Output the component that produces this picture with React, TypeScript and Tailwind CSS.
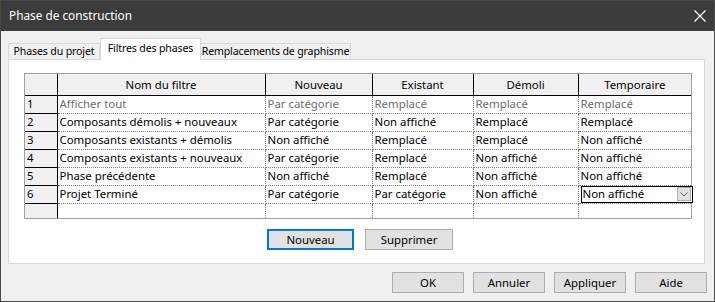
import React from "react";

const font = { fontFamily: '"Noto Sans", "Open Sans", sans-serif' };

type Row = { n: string; name: string; cells: string[]; gray?: boolean };

const rows: Row[] = [
  { n: "1", name: "Afficher tout", cells: ["Par catégorie", "Remplacé", "Remplacé", "Remplacé"], gray: true },
  { n: "2", name: "Composants démolis + nouveaux", cells: ["Par catégorie", "Non affiché", "Remplacé", "Remplacé"] },
  { n: "3", name: "Composants existants + démolis", cells: ["Non affiché", "Remplacé", "Remplacé", "Non affiché"] },
  { n: "4", name: "Composants existants + nouveaux", cells: ["Par catégorie", "Remplacé", "Non affiché", "Non affiché"] },
  { n: "5", name: "Phase précédente", cells: ["Non affiché", "Remplacé", "Non affiché", "Non affiché"] },
  { n: "6", name: "Projet Terminé", cells: ["Par catégorie", "Par catégorie", "Non affiché", ""] },
];

const widths = [33, 208, 107, 101, 105, 114];
const headers = ["", "Nom du filtre", "Nouveau", "Existant", "Démoli", "Temporaire"];

function Dropdown() {
  return (
    <div className="flex h-[17px] w-[112px] items-center border border-black bg-white">
      <span className="flex-1 pl-[1px] leading-none text-black">Non affiché</span>
      <div className="mr-[1px] flex h-[14px] w-[14px] items-center justify-center border border-[#adadad] bg-[#e1e1e1]">
        <svg width="8" height="5" viewBox="0 0 8 5">
          <path d="M0.5 0.5 L4 4 L7.5 0.5" fill="none" stroke="#606060" strokeWidth="1" />
        </svg>
      </div>
    </div>
  );
}

export default function App() {
  return (
    <div
      className="flex h-[302px] w-[715px] flex-col border border-[#4a4a4a] bg-[#f0f0f0] text-[11.4px] text-black"
      style={font}
    >
      {/* Title bar */}
      <div className="flex h-[30px] shrink-0 items-center justify-between bg-[#3c3c3c] pl-[8px] pr-[8px]">
        <span className="text-[11.8px] text-white">Phase de construction</span>
        <svg width="12" height="12" viewBox="0 0 12 12">
          <path d="M0.5 0.5 L11.5 11.5 M11.5 0.5 L0.5 11.5" stroke="#ffffff" strokeWidth="1.2" />
        </svg>
      </div>

      <div className="flex flex-1 flex-col px-[7px] pt-[7px]">
        {/* Tabs */}
        <div className="relative z-10 flex h-[21px] items-end whitespace-nowrap text-[10.6px] tracking-[-0.15px]">
          <div className="flex h-[16px] w-[92px] items-center justify-center border border-b-0 border-[#d9d9d9] bg-[#f0f0f0] leading-none">
            Phases du projet
          </div>
          <div className="-mb-[1px] flex h-[22px] w-[101px] items-center justify-center border border-b-0 border-[#d9d9d9] bg-white pb-[2px] leading-none">
            Filtres des phases
          </div>
          <div className="flex h-[16px] w-[150px] items-center justify-center border border-b-0 border-l-0 border-[#d9d9d9] bg-[#f0f0f0] leading-none">
            Remplacements de graphisme
          </div>
        </div>

        {/* Panel */}
        <div className="flex h-[205px] w-[697px] flex-col border border-[#d9d9d9] bg-white pl-[15px] pt-[13px]">
          <div className="w-[668px] border border-[#a0a0a0]">
            <table className="border-collapse" style={{ tableLayout: "fixed", width: 666 }}>
              <colgroup>
                {widths.map((w, i) => (
                  <col key={i} style={{ width: i === 0 ? w - 1 : i === 5 ? w - 1 : w }} />
                ))}
              </colgroup>
              <thead>
                <tr className="h-[21px]">
                  {headers.map((h, i) => (
                    <th
                      key={i}
                      className="border border-t-0 border-black bg-[#f0f0f0] p-0 text-center font-normal first:border-l-0 last:border-r-0"
                    >
                      {h}
                    </th>
                  ))}
                </tr>
              </thead>
              <tbody>
                {rows.map((r) => (
                  <tr key={r.n} className="h-[18px]">
                    <td className="border border-l-0 border-black bg-[#f0f0f0] p-0 pl-[2px] leading-none">{r.n}</td>
                    <td
                      className={`border border-dotted border-[#808080] border-l-black p-0 pl-[2px] leading-none whitespace-nowrap ${
                        r.gray ? "text-[#6d6d6d]" : ""
                      }`}
                    >
                      {r.name}
                    </td>
                    {r.cells.map((c, i) => (
                      <td
                        key={i}
                        className={`border border-dotted border-[#808080] p-0 pl-[2px] leading-none whitespace-nowrap last:border-r-0 ${
                          r.gray ? "text-[#6d6d6d]" : ""
                        }`}
                      >
                        {r.n === "6" && i === 3 ? <Dropdown /> : c}
                      </td>
                    ))}
                  </tr>
                ))}
                <tr className="h-[15px]">
                  <td className="border border-b-0 border-l-0 border-black bg-[#f0f0f0] p-0"></td>
                  {[0, 1, 2, 3, 4].map((i) => (
                    <td key={i} className="border border-b-0 border-dotted border-[#808080] p-0 last:border-r-0"></td>
                  ))}
                </tr>
              </tbody>
            </table>
          </div>

          {/* Nouveau / Supprimer */}
          <div className="mt-[10px] flex gap-[11px] pl-[243px]">
            <button className="flex h-[21px] w-[87px] items-center justify-center border-2 border-[#0078d7] bg-[#e1e1e1] leading-none">
              Nouveau
            </button>
            <button className="flex h-[21px] w-[88px] items-center justify-center border border-[#adadad] bg-[#e1e1e1] leading-none">
              Supprimer
            </button>
          </div>
        </div>

        {/* Bottom buttons */}
        <div className="mt-[8px] flex justify-end gap-[9px] pr-0">
          {["OK", "Annuler", "Appliquer", "Aide"].map((b) => (
            <button
              key={b}
              className="flex h-[21px] w-[72px] items-center justify-center border border-[#adadad] bg-[#e1e1e1] leading-none"
            >
              {b}
            </button>
          ))}
        </div>
      </div>
    </div>
  );
}
